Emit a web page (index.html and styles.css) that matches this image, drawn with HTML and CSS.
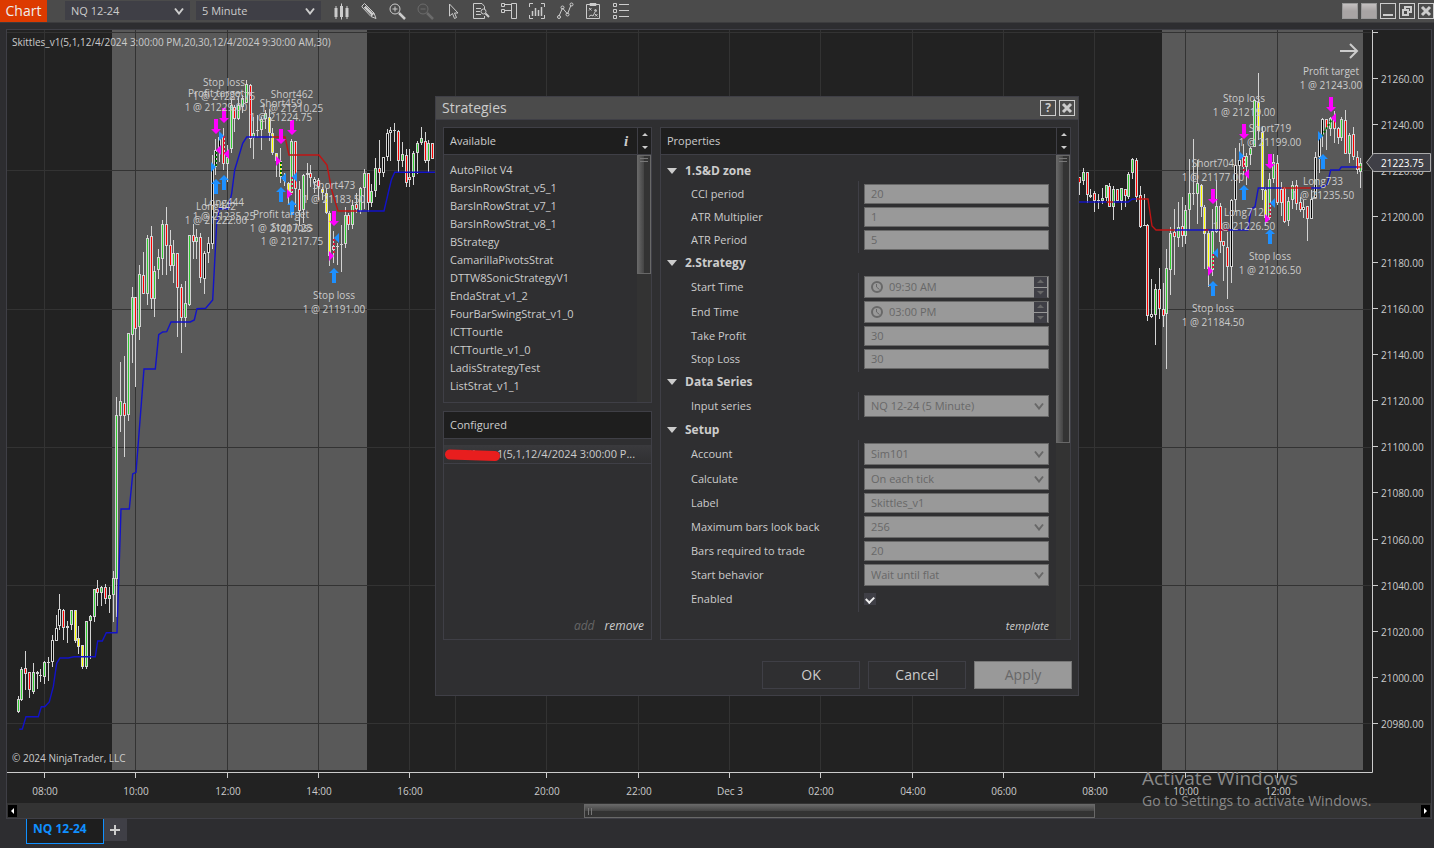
FILE: index.html
```html
<!DOCTYPE html>
<html lang="en">
<head>
<meta charset="utf-8">
<title>Chart - NQ 12-24</title>
<link rel="stylesheet" href="styles.css">
</head>
<body>
<header class="toolbar">
  <h1 class="app-title">Chart</h1>
  <div class="combo combo-dark">
    <select aria-label="Instrument"><option>NQ 12-24</option></select>
    <svg class="chevron" viewBox="0 0 10 8"><path d="M1 1.5 5 6.5 9 1.5"/></svg>
  </div>
  <div class="combo combo-dark">
    <select aria-label="Interval"><option>5 Minute</option></select>
    <svg class="chevron" viewBox="0 0 10 8"><path d="M1 1.5 5 6.5 9 1.5"/></svg>
  </div>
  <nav class="tools" aria-label="Chart tools">
    <button class="tool" aria-label="Chart style"><svg viewBox="0 0 18 18"><path d="M4 4v13M9.500 1.500v16M15 4v13"/><path d="M4 6v9M9.500 4v11M15 6v9" stroke-width="3"/></svg></button>
    <button class="tool" aria-label="Drawing tools"><svg viewBox="0 0 18 18"><path d="M2 4 4.500 1.500 14 11l2 5.500L11 14.500 2 5zM4 6l2.500-2.500M11 14l3-3"/><path d="M5 5l8 8" stroke-width="2.500"/></svg></button>
    <button class="tool" aria-label="Zoom in"><svg viewBox="0 0 18 18"><circle cx="7" cy="7" r="5"/><path d="M7 4.500v5M4.500 7h5"/><path d="M11 11l6 6" stroke-width="2.500"/></svg></button>
    <button class="tool" aria-label="Zoom out" disabled><svg viewBox="0 0 18 18"><circle cx="7" cy="7" r="5"/><path d="M4.500 7h5"/><path d="M11 11l6 6" stroke-width="2.500"/></svg></button>
    <button class="tool" aria-label="Cursor"><svg viewBox="0 0 18 18"><path d="M5.500 2v12l3-2.500 2 5 2-1-2-4.500h3.500z"/></svg></button>
    <button class="tool" aria-label="Data box"><svg viewBox="0 0 18 18"><path d="M12.500 7V4.500L10 1.500H1.500v15h11V14M4 6.500h5M4 9.500h4M4 12.500h5"/><circle cx="11.500" cy="9.500" r="2.500"/><path d="M13.500 11.500l3.500 3.500" stroke-width="2"/></svg></button>
    <button class="tool" aria-label="Chart trader"><svg viewBox="0 0 18 18"><path d="M1.500 1.500h3v3h-3zM1.500 7.500h3v3h-3zM4.500 2.500h7M4.500 8.500h7M11.500 1.500h5v15h-5z"/></svg></button>
    <button class="tool" aria-label="Data series"><svg viewBox="0 0 18 18"><path d="M1.500 5V1.500H5M13 1.500h3.500V5M1.500 13v3.500H5M13 16.500h3.500V13"/><path d="M4.500 9v5M7.500 6v8M10.500 8v6M13.500 5v9" stroke-width="1.500"/></svg></button>
    <button class="tool" aria-label="Indicators"><svg viewBox="0 0 18 18"><path d="M3 14 6.500 6l5 6 3.500-9"/><circle cx="3" cy="15" r="1.500"/><circle cx="6.500" cy="5.500" r="1.500"/><circle cx="11.500" cy="12.500" r="1.500"/><circle cx="15.500" cy="2.500" r="1.500"/></svg></button>
    <button class="tool" aria-label="Strategies"><svg viewBox="0 0 18 18"><path d="M2.500 2.500h13v14h-13zM6 1.500h6v2H6zM5 6l2.500 2.500M7.500 6 5 8.500M5 14.500l2-1.500 2 1 3-6M10 8.500l2-1 .5 2M11 12l2.500 2.500M13.500 12 11 14.500"/></svg></button>
    <button class="tool" aria-label="Properties"><svg viewBox="0 0 18 18"><path d="M1.500 1.500h3v3h-3zM1.500 7.500h3v3h-3zM1.500 13.500h3v3h-3zM7 2.500h10M7 8.500h10M7 14.500h10"/></svg></button>
  </nav>
  <div class="window-buttons">
    <button class="swatch" aria-label="Instrument link"></button>
    <button class="swatch" aria-label="Interval link"></button>
    <button class="box-button" aria-label="Minimize"><svg viewBox="0 0 14 14"><path d="M2 11h10" stroke-width="2"/></svg></button>
    <button class="box-button" aria-label="Restore"><svg viewBox="0 0 14 14"><path d="M5 5V3h6v5H9M3 6h5v5H3z" stroke-width="2"/></svg></button>
    <button class="box-button" aria-label="Close"><svg viewBox="0 0 14 14"><path d="M3 3l8 8M11 3l-8 8" stroke-width="3"/></svg></button>
  </div>
</header>

<main class="workspace">
  <section class="chart-panel" aria-label="Chart">
    <svg class="chart" id="chart" viewBox="7 30 1424 773"></svg>
    <div class="time-scroll">
      <button class="scroll-end" aria-label="Scroll left"><svg viewBox="0 0 9 12"><path d="M6 3v6L3 6z"/></svg></button>
      <div class="scroll-track"><div class="scroll-thumb"></div></div>
      <button class="scroll-end" aria-label="Scroll right"><svg viewBox="0 0 9 12"><path d="M3 3v6l3-3z"/></svg></button>
    </div>
  </section>
</main>

<footer class="tabs">
  <button class="tab">NQ 12-24</button>
  <button class="tab-add" aria-label="Add tab"><svg viewBox="0 0 12 12"><path d="M6 1v10M1 6h10"/></svg></button>
</footer>

<div class="dialog" role="dialog" aria-labelledby="dialog-title">
  <div class="dialog-bar">
    <h2 class="dialog-title" id="dialog-title">Strategies</h2>
    <button class="box-button help" aria-label="Help">?</button>
    <button class="box-button" aria-label="Close dialog"><svg viewBox="0 0 14 14"><path d="M3 3l8 8M11 3l-8 8" stroke-width="3"/></svg></button>
  </div>
  <div class="dialog-body">
    <div class="lists">
      <section class="panel available">
        <div class="panel-head">
          <h3>Available</h3>
          <button class="info" aria-label="Information">i</button>
          <div class="steppers"><svg viewBox="0 0 14 26"><path d="M4 8h6L7 5zM4 18h6l-3 3z"/></svg></div>
        </div>
        <div class="panel-body">
          <ul class="strategy-list">
            <li>AutoPilot V4</li><li>BarsInRowStrat_v5_1</li><li>BarsInRowStrat_v7_1</li><li>BarsInRowStrat_v8_1</li><li>BStrategy</li><li>CamarillaPivotsStrat</li><li>DTTW8SonicStrategyV1</li><li>EndaStrat_v1_2</li><li>FourBarSwingStrat_v1_0</li><li>ICTTourtle</li><li>ICTTourtle_v1_0</li><li>LadisStrategyTest</li><li>ListStrat_v1_1</li>
          </ul>
          <div class="vscroll"><div class="vthumb short"></div></div>
        </div>
      </section>
      <section class="panel configured">
        <div class="panel-head"><h3>Configured</h3></div>
        <div class="selected-row">
          <span>Skittles_v1(5,1,12/4/2024 3:00:00 P...</span>
          <svg class="redaction" viewBox="0 0 57 13"><path d="M6 6.500 51 8"/></svg>
        </div>
        <div class="links"><button class="link" disabled>add</button><button class="link">remove</button></div>
      </section>
    </div>
    <section class="panel properties">
      <div class="panel-head">
        <h3>Properties</h3>
        <div class="steppers"><svg viewBox="0 0 14 26"><path d="M4 8h6L7 5zM4 18h6l-3 3z"/></svg></div>
      </div>
      <div class="panel-body">
        <form class="form" id="properties">
        </form>
        <div class="vscroll"><div class="vthumb long"></div></div>
      </div>
    </section>
  </div>
  <div class="dialog-actions">
    <button class="action">OK</button>
    <button class="action">Cancel</button>
    <button class="action" disabled>Apply</button>
  </div>
</div>

<div class="watermark">
  <p class="watermark-title">Activate Windows</p>
  <p>Go to Settings to activate Windows.</p>
</div>
<script src="script.js"></script>
</body>
</html>
```
FILE: styles.css
```css
* { box-sizing: border-box; }
body {
  margin: 0;
  min-height: 100vh;
  display: flex;
  flex-direction: column;
  position: relative;
  background: #2d2d30;
  color: #ccc;
  font: 11px/18px "Open Sans", "Noto Sans", sans-serif;
}
h1, h2, h3, p, ul { margin: 0; padding: 0; font-weight: 400; list-style: none; }
h3 { font-size: 11px; }
button, select, input { font: inherit; color: inherit; margin: 0; padding: 0; border: 0; background: none; border-radius: 0; }
svg { display: block; fill: none; stroke: #ccc; }

.toolbar {
  height: 23px;
  display: flex;
  align-items: flex-start;
  background: #4b4b4b;
  border-bottom: 1px solid #3c3c3e;
}
.app-title {
  width: 47px;
  height: 22px;
  margin-right: 18px;
  background: #dd3a00;
  color: #eee;
  font-size: 14px;
  line-height: 22px;
  text-align: center;
}
.combo { display: grid; align-items: center; }
.combo > * { grid-area: 1 / 1; }
.combo select { appearance: none; width: 100%; height: 100%; padding-left: 6px; }
.chevron { width: 10px; height: 8px; justify-self: end; margin-right: 4px; stroke-width: 2; pointer-events: none; }
.combo-dark { width: 125px; height: 19px; margin: 1px 6px 0 0; background: #3f3f46; }
.combo-dark .chevron { margin-right: 6px; }
.tools { display: flex; gap: 10px; margin: 2px 0 0 5px; }
.tool { width: 18px; height: 18px; }
.tool:disabled { opacity: 0.25; }
.window-buttons { display: flex; gap: 3px; margin: 3px 0 0 auto; }
.swatch { width: 16px; height: 16px; border: 1px solid #999; background: linear-gradient(#c4c0c0, #a8a4a4 50%); }
.box-button { width: 16px; height: 16px; border: 1px solid #ccc; }
.help { font: 700 12px/14px "Open Sans", sans-serif; }

.workspace { padding: 6px 2px 0 6px; }
.chart-panel { border: 1px solid #3f3f46; background: #222; }
.chart { width: 100%; height: auto; stroke: none; }
.chart text { fill: #ccc; font-size: 10px; }
.grid-line { stroke: #333; }
.session { fill: #595959; }
.axis { stroke: #ccc; }
.ma-up { stroke: #1212c8; stroke-width: 1.4; fill: none; }
.ma-down { stroke: #c01414; stroke-width: 1.4; fill: none; }
.mid { text-anchor: middle; }
.sell { fill: #f0f; }
.buy { fill: #1e90ff; }
.price-tag { fill: #3f3f46; stroke: #aaa; stroke-width: 1; }
.chart .price-now { fill: #fff; }
.time-scroll { display: flex; align-items: center; height: 15px; padding: 0 1px; background: #333; }
.scroll-end { width: 9px; height: 12px; background: #000; }
.scroll-end svg { fill: #fff; stroke: none; }
.scroll-track { flex: 1; height: 14px; }
.scroll-thumb {
  width: 36.4%;
  height: 14px;
  margin-left: 40.4%;
  border: 1px solid #686868;
  background:
    linear-gradient(90deg, #777 1px, transparent 1px 3px, #777 3px 4px, transparent 4px) 3px 3px / 5px 7px no-repeat,
    linear-gradient(#666, #444 50%, #333 50%);
}
.tabs { display: flex; padding-left: 26px; }
.tab { width: 78px; height: 25px; padding: 0 0 5px 6px; border: 1px solid #1090ff; border-top: 0; background: #1e1e1e; color: #1090ff; font-weight: 700; font-size: 12px; text-align: left; }
.tab-add { width: 23px; height: 22px; padding-left: 5px; background: #3f3f46; }
.tab-add svg { width: 12px; height: 12px; stroke-width: 2; }

.dialog {
  position: absolute;
  left: 435px;
  top: 96px;
  width: 644px;
  border: 1px solid #3f3f46;
  background: #2f2f31;
}
.dialog-bar { display: flex; align-items: center; gap: 3px; height: 23px; padding: 0 3px 0 6px; background: #4b4b4b; border-bottom: 1px solid #3f3f46; }
.dialog-title { flex: 1; font-size: 14px; }
.dialog-body { display: flex; gap: 8px; padding: 7px 7px 0; }
.lists { display: flex; flex-direction: column; gap: 8px; width: 209px; }
.panel { display: flex; flex-direction: column; border: 1px solid #3f3f46; }
.panel-head { display: flex; height: 27px; background: #1e1e1e; border-bottom: 1px solid #3f3f46; }
.panel-head h3 { flex: 1; padding-left: 6px; line-height: 26px; }
.info { width: 22px; font: italic 700 15px/24px "Liberation Serif", serif; }
.steppers { width: 14px; border-left: 1px solid #3f3f46; }
.steppers svg { fill: #ccc; stroke: none; width: 14px; height: 26px; }
.panel-body { display: flex; flex: 1; }
.strategy-list { flex: 1; padding: 6px 0 7px 6px; }
.vscroll { width: 14px; background: #333; }
.vthumb {
  border: 1px solid #686868;
  background:
    linear-gradient(#777 1px, transparent 1px 3px, #777 3px 4px, transparent 4px) 2px 2px / 8px 5px no-repeat,
    linear-gradient(90deg, #666, #444 50%, #333 50%);
}
.short { height: 119px; }
.long { height: 288px; }
.configured { flex: 1; }
.selected-row { position: relative; height: 19px; margin-top: 6px; padding-left: 6px; background: linear-gradient(#3a3a3d, #303032); border-bottom: 1px solid #3f3f46; white-space: nowrap; }
.redaction { position: absolute; left: 0; top: 3px; width: 57px; height: 13px; stroke: #e81e1e; stroke-width: 10; stroke-linecap: round; }
.links { display: flex; justify-content: flex-end; gap: 10px; margin-top: auto; padding: 0 7px 4px 0; font-size: 12px; }
.link { font-style: italic; }
.link:disabled { color: #666; }
.properties { flex: 1; }
.form { flex: 1; padding: 6px 7px 4px 6px; }
.group-head { display: flex; align-items: center; gap: 8px; height: 20px; font-weight: 700; font-size: 12px; }
.group-head svg { width: 10px; height: 6px; fill: #ccc; stroke: none; }
.group { position: relative; display: flex; flex-direction: column; gap: 3px; padding: 3px 0; }
.group::after { content: ""; position: absolute; inset: 0 190px 0 auto; border-left: 1px solid #3f3f46; }
.row { display: grid; grid-template-columns: 1fr 185px; align-items: center; padding-left: 24px; }
.field { width: 185px; height: 20px; padding: 0 0 1px 6px; border: 1px solid #686868; background: #999; color: #686868; opacity: 1; }
.combo.field { height: 22px; padding: 0; }
.field .chevron { stroke: #686868; }
.field select { opacity: 1; }
.time { display: flex; align-items: center; gap: 6px; height: 22px; padding-bottom: 0; }
.time > svg { width: 12px; height: 12px; stroke: #686868; stroke-width: 2; }
.time input { flex: 1; min-width: 0; }
.spin { display: grid; gap: 1px; width: 13px; height: 20px; margin-right: 1px; }
.spin svg { width: 13px; height: 10px; background: #3f3f46; fill: #686868; stroke: none; }
.check-cell { display: flex; align-items: center; height: 20px; }
.check { appearance: none; width: 12px; height: 12px; background: #3f3f46; display: grid; place-items: center; }
.check::after { content: ""; width: 6px; height: 4px; border: solid #eee; border-width: 0 0 2px 2px; rotate: -45deg; }
.template { display: flex; justify-content: flex-end; padding-top: 5px; }
.dialog-actions { display: flex; justify-content: flex-end; gap: 8px; padding: 21px 6px 6px; }
.action { width: 98px; height: 28px; border: 1px solid #3f3f46; font-size: 14px; }
.action:disabled { background: #999; border-color: #777; color: #686868; }

.watermark { position: absolute; right: 56px; bottom: 37px; width: 236px; color: #888; font-size: 14px; line-height: 20px; white-space: nowrap; pointer-events: none; }
.watermark-title { font-size: 19px; line-height: 26px; }
```
FILE: script.js
```js
const NS = "http://www.w3.org/2000/svg";
const chart = document.getElementById("chart");
function add(tag, attrs, text) {
  const el = document.createElementNS(NS, tag);
  for (const k in attrs) el.setAttribute(k, attrs[k]);
  if (text) el.textContent = text;
  chart.appendChild(el);
}

add("rect", { x: 112, y: 30, width: 255, height: 740, class: "session" });
add("rect", { x: 1162, y: 30, width: 201, height: 740, class: "session" });

const times = [[44, "08:00"], [135, "10:00"], [227, "12:00"], [318, "14:00"], [409, "16:00"], [455, ""], [546, "20:00"], [638, "22:00"], [729, "Dec 3"], [820, "02:00"], [912, "04:00"], [1003, "06:00"], [1094, "08:00"], [1185, "10:00"], [1277, "12:00"]];
for (const [x, label] of times) {
  add("path", { d: `M${x + 0.5} 30V770`, class: "grid-line" });
  if (label) {
    add("path", { d: `M${x + 0.5} 772v6`, class: "axis" });
    add("text", { x: x + 1, y: 795, class: "mid" }, label);
  }
}
for (const y of [32, 170, 309, 447, 585, 723]) add("path", { d: `M7 ${y + 0.5}H1371`, class: "grid-line" });
add("path", { d: "M1372.5 30V772.5H7M1372 32.5h6", class: "axis", fill: "none" });
for (let i = 0; i < 15; i++) {
  const y = Math.round(78 + i * 46.05);
  add("path", { d: `M1372 ${y + 0.5}h6`, class: "axis" });
  add("text", { x: 1381, y: y + 5 }, (21260 - i * 20).toFixed(2));
}

/* Candles: x, high, body top, body bottom, low (thirds of a pixel from the block origin), colour */
const fills = { g: "#32cd32", r: "#f00", y: "#ff0", k: "#000" };
const blocks = [
  { ox: 0, oy: 340, rows: `55 1068 1077 1115 1118 g;64 982 988 1079 1082 g;76 933 985 1001 1049 r;88 997 997 1049 1074 r;100 969 997 1055 1062 g;112 992 997 1003 1047 r;121 987 1006 1009 1026 k;133 963 967 1010 1032 g;145 951 967 968 1023 k;157 885 901 967 980 k;169 825 865 902 902 k;178 762 808 857 869 k;190 807 811 865 899 r;202 844 859 865 909 g;214 811 811 854 869 g;226 811 811 902 908 y;235 858 895 920 942 y;247 916 916 980 986 y;259 844 844 980 986 g;271 825 829 844 957 g;283 747 748 830 846 g;292 720 745 758 798 r;304 738 742 758 798 g;316 732 740 776 792 r;328 742 764 776 819 g;340 693 715 764 846 g;349 171 226 718 830 g;361 66 184 227 276 g;373 48 190 227 351 r;385 -20 -20 224 242 g;398 -159 -128 -14 69 g;406 -128 -128 -32 141 r` },
  { ox: 0, oy: 60, rows: `419 616 643 802 840 g;430 576 646 703 703 r;443 525 535 703 735 g;454 499 529 718 746 r;463 618 634 718 770 g;475 567 592 631 657 g;488 480 493 598 645 g;499 441 493 559 646 r;511 510 556 619 634 r;520 540 580 619 669 g;532 580 580 685 830 r;544 673 682 773 879 r;556 664 730 773 802 g;568 526 526 734 738 g;580 492 526 547 597 r;590 507 532 547 598 g;601 520 532 655 668 r;613 574 580 658 702 k;625 531 550 580 609 k;637 286 320 553 566 k;647 237 270 320 345 k;659 226 230 268 305 k;670 205 228 313 330 r;682 255 290 313 365 g;694 120 136 268 280 g;703 136 142 178 216 r;715 110 136 178 180 g;727 105 115 140 160 g;739 60 72 130 130 g;751 73 76 238 265 r;760 172 220 235 297 g;772 165 211 214 230 k;784 170 178 211 270 g;796 150 160 178 208 g;808 147 172 220 242 y;817 205 220 278 285 y;829 280 280 302 350 y;841 265 304 350 368 y;853 340 352 364 378 k;865 365 370 402 432 y;875 238 244 400 404 g;886 244 244 386 440 r;898 363 388 452 498 r;910 342 345 450 490 g;922 309 338 345 420 g;931 316 338 355 381 r;943 350 356 370 398 k;955 355 360 380 420 r;967 380 388 398 420 y;979 385 398 458 462 y;988 453 460 588 618 y;1000 513 558 570 608 k;1012 548 559 562 614 k;1024 495 552 556 636 k;1036 442 465 553 565 g;1045 458 465 496 510 r;1057 420 434 496 507 g;1069 398 432 447 458 r;1081 380 385 452 462 g;1093 328 338 384 448 g;1105 338 338 430 455 r;1114 372 394 430 440 g;1126 294 325 394 410 g;1138 240 325 340 375 r;1150 290 290 340 352 k;1162 208 220 290 302 k;1171 201 211 220 303 k;1183 189 211 213 246 k;1195 211 214 304 335 r;1207 247 283 304 320 g;1219 268 286 370 380 r;1229 268 351 361 381 r;1240 273 280 352 374 g;1252 242 250 280 341 g;1264 201 235 249 255 g;1276 216 244 304 310 r;1285 240 249 304 338 g;1297 250 250 298 298 r` },
  { ox: 1070, oy: 140, rows: `28 110 112 130 165 r;40 85 97 124 135 g;52 97 97 166 190 r;61 148 165 170 174 g;73 152 160 184 215 r;85 163 181 184 207 k;97 145 175 184 193 g;109 136 136 174 184 g;118 130 139 202 202 r;130 138 148 202 240 g;142 148 148 184 184 r;154 143 145 184 210 g;166 147 148 168 201 r;175 95 103 170 178 g;187 54 58 100 118 g;199 54 61 170 187 r;211 137 166 260 263 r;223 163 255 257 257 k;232 252 254 529 542 r;244 416 523 530 534 k;256 432 448 524 615 g;268 383 448 508 537 r;280 430 508 527 560 r;289 326 385 521 687 g;301 262 280 391 465 g;313 207 277 290 405 r;325 185 260 293 321 g;337 172 259 289 320 r;346 195 210 289 312 g;358 58 160 211 270 g;370 -3 159 161 194 k` },
  { ox: 1100, oy: 0, rows: `292 480 550 581 671 g;305 552 554 622 650 y;313 615 622 703 808 y;325 690 700 806 861 y;337 627 694 809 827 g;349 540 618 697 700 g;361 610 618 727 758 r;370 724 724 737 843 r;382 697 740 802 896 r;394 597 601 800 848 k;406 445 495 601 635 k;418 428 480 497 550 k;430 432 468 500 525 r;439 460 468 500 555 g;451 440 443 466 495 g;463 296 300 440 440 g;475 219 306 394 420 y;487 380 395 569 600 y;496 560 569 655 677 y;508 520 538 655 660 g;520 462 486 538 548 g;532 466 490 610 615 r;544 545 568 608 649 r;553 560 565 667 670 r;565 590 602 664 679 g;577 542 555 600 627 g;589 540 555 612 630 r;601 590 605 630 636 r;610 600 622 630 654 k;622 618 618 658 722 r;634 570 598 657 657 k;646 457 470 594 594 k;658 405 408 470 520 k;667 354 358 406 440 k;679 358 358 386 450 r;691 350 355 386 408 g;703 334 360 388 428 r;715 380 385 415 432 r;724 350 358 415 422 g;736 331 360 461 461 r;748 398 405 461 490 g;760 380 403 472 480 r;772 453 472 510 523 r;781 475 488 515 563 g` }
];
for (const { ox, oy, rows } of blocks) {
  for (const row of rows.split(";")) {
    const p = row.split(" ");
    const x = Math.floor(ox + p[0] / 3);
    const [hi, top, bot, lo] = p.slice(1, 5).map(v => Math.round(oy + v / 3));
    add("rect", { x, y: hi, width: 1, height: Math.max(1, lo - hi), fill: "#d3d3d3" });
    add("rect", { x: x - 1, y: top, width: 3, height: Math.max(1, bot - top), fill: "#d3d3d3" });
    if (bot - top > 2) add("rect", { x, y: top + 1, width: 1, height: bot - top - 2, fill: fills[p[5]] });
  }
}

const line = (cls, ox, oy, pts) => add("polyline", {
  class: cls,
  points: pts.split(" ").map(p => p.split(",").map(Number)).map(([x, y]) => `${(ox + x / 3).toFixed(1)},${(oy + y / 3).toFixed(1)}`).join(" ")
});
line("ma-up", 0, 340, "58,1168 67,1167 78,1130 115,1130 124,1100 134,1100 148,1086 160,1040 170,970 180,954 205,954 222,950 286,950 293,903 307,903 319,878 351,878 363,507 388,507 398,402 408,397 432,87 466,87 476,-16 488,-24 500,-25 513,-54 571,-54 583,-60 591,-94 617,-95 638,-120 650,-350 658,-394 685,-394 695,-440 704,-510 728,-590 740,-609 818,-609");
line("ma-down", 0, 60, "818,231 855,231 867,285 957,285 981,315 995,390 1014,453 1072,453");
line("ma-up", 0, 60, "1072,453 1152,453 1174,360 1184,337 1305,337");
line("ma-up", 1070, 140, "27,186 110,186");
line("ma-down", 1070, 140, "110,186 130,186");
line("ma-up", 1070, 140, "130,186 175,186 187,177 199,177");
line("ma-down", 1070, 140, "199,177 234,177 246,258 258,270 315,270");
line("ma-up", 1100, 0, "225,690 443,690 454,627 465,620 475,564 545,564");
line("ma-down", 1100, 0, "313,690 325,690");
line("ma-down", 1100, 0, "358,690 385,690");
line("ma-down", 1100, 0, "545,564 634,564");
line("ma-up", 1100, 0, "634,564 660,564 682,553 692,510 718,510 724,501 772,501");
line("ma-down", 1100, 0, "772,501 784,501");

/* Trade connectors */
for (const [x1, y1, x2, y2, c] of [[216, 166, 216, 150, "#006400"], [224, 136, 224, 154, "#dc143c"], [281, 162, 281, 177, "#006400"], [292, 177, 292, 194, "#dc143c"], [334, 239, 334, 255, "#dc143c"], [1213, 254, 1213, 270, "#dc143c"], [1244, 157, 1244, 173, "#dc143c"], [1270, 203, 1270, 219, "#dc143c"], [1322, 136, 1332, 119, "#006400"]])
  add("path", { d: `M${x1} ${y1}L${x2} ${y2}`, stroke: c, "stroke-width": 2, "stroke-dasharray": "2 2" });

/* Arrows point from their tail: sell down, buy up */
for (const [x, y] of [[216, 119], [224, 108], [281, 129], [292, 120], [334, 211], [1213, 189], [1244, 124], [1270, 154], [1331, 97]])
  add("path", { d: `M${x - 2} ${y}h4v10h3l-5 5-5-5h3z`, class: "sell" });
for (const [x, y] of [[216, 179], [224, 175], [281, 187], [292, 200], [334, 268], [1213, 281], [1244, 185], [1270, 229], [1323, 154]])
  add("path", { d: `M${x} ${y}l5 5h-3v10h-4v-10h-3z`, class: "buy" });
for (const [x, y, dir, cls] of [[211, 167, 1, "buy"], [219, 136, 1, "buy"], [286, 178, -1, "buy"], [297, 177, -1, "buy"], [339, 238, -1, "buy"], [221, 150, -1, "sell"], [229, 154, -1, "sell"], [276, 161, 1, "sell"], [287, 194, 1, "sell"], [329, 256, 1, "sell"], [1218, 253, -1, "buy"], [1239, 156, 1, "buy"], [1275, 203, -1, "buy"], [1318, 136, 1, "buy"], [1208, 271, 1, "sell"], [1249, 174, -1, "sell"], [1265, 219, 1, "sell"], [1336, 118, -1, "sell"]])
  add("path", { d: `M${x} ${y - 5}v10l${5 * dir}-5z`, class: cls });

/* Execution labels: centre x, first baseline, lines */
const marks = [
  [224, 86, "Stop loss", "1 @ 21227.75"], [216, 97, "Profit target", "1 @ 21229.00"], [292, 98, "Short462", "1 @ 21210.25"], [281, 107, "Short459", "1 @ 21224.75"],
  [224, 206, "Long444", "1 @ 21235.25"], [216, 210, "Long442", "1 @ 21222.00"], [281, 218, "Profit target", "1 @ 21217.25"], [292, 231, "Stop loss", "1 @ 21217.75"],
  [334, 189, "Short473", "1 @ 21183.50"], [334, 299, "Stop loss", "1 @ 21191.00"], [1331, 75, "Profit target", "1 @ 21243.00"], [1244, 102, "Stop loss", "1 @ 21219.00"],
  [1270, 132, "Short719", "1 @ 21199.00"], [1213, 167, "Short704", "1 @ 21177.00"], [1244, 216, "Long712", "1 @ 21226.50"], [1323, 185, "Long733", "1 @ 21235.50"],
  [1270, 260, "Stop loss", "1 @ 21206.50"], [1213, 312, "Stop loss", "1 @ 21184.50"]
];
for (const [x, y, a, b] of marks) {
  add("text", { x, y, class: "mid" }, a);
  add("text", { x, y: y + 14, class: "mid" }, b);
}
add("text", { x: 12, y: 46 }, "Skittles_v1(5,1,12/4/2024 3:00:00 PM,20,30,12/4/2024 9:30:00 AM,30)");
add("text", { x: 12, y: 762 }, "© 2024 NinjaTrader, LLC");
add("path", { d: "M1340 51h17M1350 44l7 7-7 7", stroke: "#ccc", "stroke-width": 2, fill: "none" });
add("path", { d: "M1366.5 162.5l7-9h57v18h-57z", class: "price-tag" });
add("text", { x: 1381, y: 167, class: "price-now" }, "21223.75");

/* Strategy property form */
const properties = [
  ["1.S&D zone", [["CCI period", "text", "20"], ["ATR Multiplier", "text", "1"], ["ATR Period", "text", "5"]]],
  ["2.Strategy", [["Start Time", "time", "09:30 AM"], ["End Time", "time", "03:00 PM"], ["Take Profit", "text", "30"], ["Stop Loss", "text", "30"]]],
  ["Data Series", [["Input series", "select", "NQ 12-24 (5 Minute)"]]],
  ["Setup", [["Account", "select", "Sim101"], ["Calculate", "select", "On each tick"], ["Label", "text", "Skittles_v1"], ["Maximum bars look back", "select", "256"], ["Bars required to trade", "text", "20"], ["Start behavior", "select", "Wait until flat"], ["Enabled", "check", ""]]]
];
const controls = {
  text: (id, v) => `<input class="field" id="${id}" value="${v}" disabled>`,
  select: (id, v) => `<div class="combo field"><select id="${id}" disabled><option>${v}</option></select><svg class="chevron" viewBox="0 0 10 8"><path d="M1 1.5 5 6.5 9 1.5"/></svg></div>`,
  time: (id, v) => `<div class="field time"><svg viewBox="0 0 12 12"><circle cx="6" cy="6" r="5"/><path d="M5.500 3v3l3 2.500" stroke-width="1"/></svg><input id="${id}" value="${v}" disabled><div class="spin"><svg viewBox="0 0 13 10"><path d="M3 6h7L6.500 2.500z"/></svg><svg viewBox="0 0 13 10"><path d="M3 3h7L6.500 6.500z"/></svg></div></div>`,
  check: id => `<div class="check-cell"><input class="check" type="checkbox" id="${id}" checked></div>`
};
document.getElementById("properties").innerHTML = properties.map(([title, rows], g) =>
  `<div class="group-head"><svg viewBox="0 0 10 6"><path d="M0 0h10L5 6z"/></svg>${title.replace("&", "&amp;")}</div><div class="group">` +
  rows.map(([label, kind, value], i) => `<div class="row"><label for="p${g}-${i}">${label}</label>${controls[kind](`p${g}-${i}`, value)}</div>`).join("") +
  `</div>`).join("") + `<div class="template"><button class="link" type="button">template</button></div>`;
```
